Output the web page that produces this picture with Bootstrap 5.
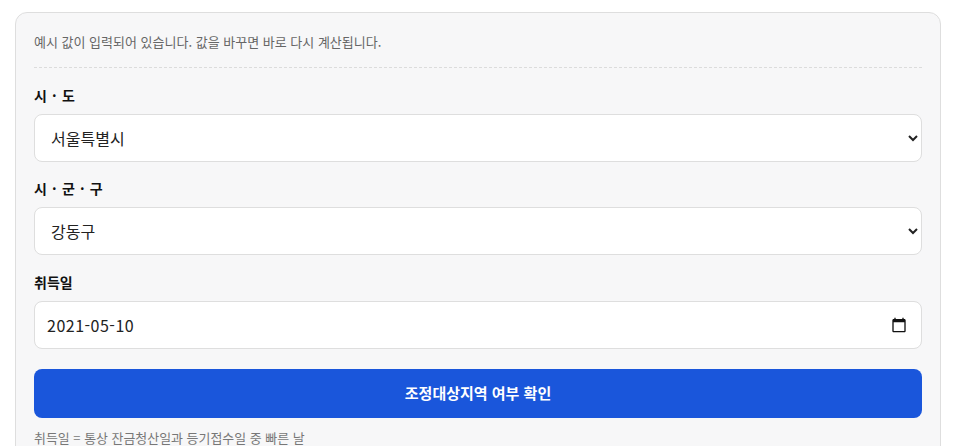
<!DOCTYPE html>
<html lang="ko">
<head>
<meta charset="utf-8">
<link href="https://cdn.jsdelivr.net/npm/bootstrap@5.3.0/dist/css/bootstrap.min.css" rel="stylesheet">
<style>
html,body{height:446px;overflow:hidden}
body{background:#fff;font-family:"Noto Sans CJK KR","Noto Sans",sans-serif;color:#111;padding:12px 14px 0 15px}
.calc-panel{background:#f7f7f8;border:1px solid #dedede;border-radius:12px;padding:18px 18px 0;height:600px}
.calc-note{font-size:13px;line-height:22px;color:#666;margin:0 0 17px;padding-bottom:14px;border-bottom:1px dashed #dcdcdc}
.calc-label{display:block;font-size:14px;font-weight:700;line-height:21px;margin-bottom:8px;color:#111;word-spacing:1.3px}
.calc-field{margin-bottom:16.4px}
.calc-input{height:48px;font-size:16px;font-family:inherit;color:#222;border:1px solid #dedede;border-radius:8px;padding:0 16px;background-color:#fff;box-shadow:none}
select.calc-input{appearance:auto;-webkit-appearance:auto;background-image:none;padding-left:12px}
input.calc-input{padding-left:12px;padding-right:44px;letter-spacing:.5px}
.calc-date{position:relative}
.calc-cal{position:absolute;right:15px;top:16px;width:16px;height:16px;pointer-events:none}
.calc-btn{height:49px;background:#1a56db;border:0;border-radius:8px;color:#fff;font-size:15px;font-weight:700;margin-top:3.8px}
.calc-hint{font-size:12.95px;line-height:20px;color:#777;margin:10px 0 0}
</style>
</head>
<body>
<form class="calc-panel">
<p class="calc-note">예시 값이 입력되어 있습니다. 값을 바꾸면 바로 다시 계산됩니다.</p>
<div class="calc-field">
<label class="calc-label" for="sido">시 · 도</label>
<select id="sido" class="form-select calc-input"><option>서울특별시</option></select>
</div>
<div class="calc-field">
<label class="calc-label" for="gugun">시 · 군 · 구</label>
<select id="gugun" class="form-select calc-input"><option>강동구</option></select>
</div>
<div class="calc-field">
<label class="calc-label" for="acq">취득일</label>
<div class="calc-date">
<input id="acq" type="text" class="form-control calc-input" value="2021-05-10">
<svg class="calc-cal" viewBox="0 0 24 24" aria-hidden="true"><path fill="#111" d="M20 3h-1V1h-2v2H7V1H5v2H4c-1.1 0-2 .9-2 2v16c0 1.1.9 2 2 2h16c1.1 0 2-.9 2-2V5c0-1.1-.9-2-2-2zm0 18H4V8h16v13z"/></svg>
</div>
</div>
<button type="button" class="btn btn-primary w-100 calc-btn">조정대상지역 여부 확인</button>
<p class="calc-hint">취득일 = 통상 잔금청산일과 등기접수일 중 빠른 날</p>
</form>
<script src="https://cdn.jsdelivr.net/npm/bootstrap@5.3.0/dist/js/bootstrap.bundle.min.js"></script>
</body>
</html>
